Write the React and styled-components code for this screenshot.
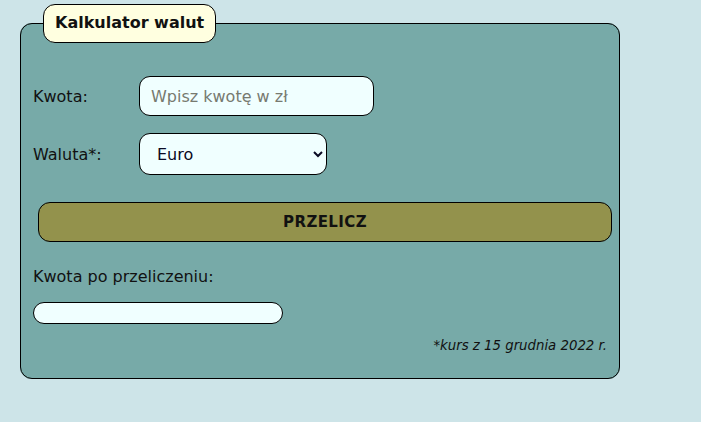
import React, { useState } from "react";
import styled, { createGlobalStyle } from "styled-components";

const GlobalStyle = createGlobalStyle`
  html, body {
    margin: 0;
    background: #cde4e8;
    font-family: "DejaVu Sans", Verdana, sans-serif;
    color: #111;
  }
`;

const Page = styled.div`
  padding: 4px 0 0 20px;
  width: 600px;
`;

const Fieldset = styled.fieldset`
  margin: 0;
  min-width: 0;
  min-inline-size: 0;
  padding: 0 12px 24px 12px;
  width: 600px;
  box-sizing: border-box;
  background: #77aaa8;
  border: 1px solid #000;
  border-radius: 12px;
  display: flex;
  flex-direction: column;
`;

const Legend = styled.legend`
  margin-left: 10px;
  padding: 9px 11px 10px;
  background: #ffffe0;
  border: 1px solid #000;
  border-radius: 12px;
  font-size: 16px;
  line-height: 18px;
  font-weight: bold;
`;

const Row = styled.div`
  display: flex;
  align-items: center;
  margin-top: ${(p) => p.$gap}px;
`;

const Label = styled.label`
  width: 106px;
  font-size: 16px;
  line-height: 19px;
`;

const TextInput = styled.input`
  width: 235px;
  height: 40px;
  box-sizing: border-box;
  padding: 0 11px;
  background: #f0ffff;
  border: 1px solid #000;
  border-radius: 11px;
  font-family: "DejaVu Sans", Verdana, sans-serif;
  font-size: 16px;
  outline: none;
  &::placeholder {
    color: #777a70;
  }
`;

const Select = styled.select`
  width: 188px;
  height: 42px;
  box-sizing: border-box;
  padding: 0 0 0 13px;
  background: #f0ffff;
  border: 1px solid #000;
  border-radius: 11px;
  font-family: "DejaVu Sans", Verdana, sans-serif;
  font-size: 16px;
  color: #0a0a23;
`;

const Button = styled.button`
  flex: none;
  margin: 27px 0 0 5px;
  width: 574px;
  height: 40px;
  background: #93924c;
  border: 1px solid #000;
  border-radius: 12px;
  font-family: "DejaVu Sans", Verdana, sans-serif;
  font-size: 15px;
  font-weight: bold;
  letter-spacing: 0.4px;
  color: #111;
  cursor: pointer;
`;

const ResultLabel = styled.div`
  margin-top: 25px;
  font-size: 16px;
  line-height: 19px;
`;

const Output = styled.output`
  display: block;
  margin-top: 16px;
  width: 250px;
  height: 22px;
  box-sizing: border-box;
  background: #f0ffff;
  border: 1px solid #000;
  border-radius: 11px;
`;

const Note = styled.p`
  margin: 14px 0 0 0;
  text-align: right;
  font-size: 13.3px;
  line-height: 16px;
  font-style: italic;
`;

export default function App() {
  const [amount, setAmount] = useState("");
  const [currency, setCurrency] = useState("EUR");

  return (
    <Page>
      <GlobalStyle />
      <Fieldset>
        <Legend>Kalkulator walut</Legend>
        <Row $gap={33}>
          <Label htmlFor="amount">Kwota:</Label>
          <TextInput
            id="amount"
            placeholder="Wpisz kwotę w zł"
            value={amount}
            onChange={(e) => setAmount(e.target.value)}
          />
        </Row>
        <Row $gap={17}>
          <Label htmlFor="currency">Waluta*:</Label>
          <Select
            id="currency"
            value={currency}
            onChange={(e) => setCurrency(e.target.value)}
          >
            <option value="EUR">Euro</option>
            <option value="USD">Dolar</option>
            <option value="GBP">Funt</option>
          </Select>
        </Row>
        <Button>PRZELICZ</Button>
        <ResultLabel>Kwota po przeliczeniu:</ResultLabel>
        <Output />
        <Note>*kurs z 15 grudnia 2022 r.</Note>
      </Fieldset>
    </Page>
  );
}
